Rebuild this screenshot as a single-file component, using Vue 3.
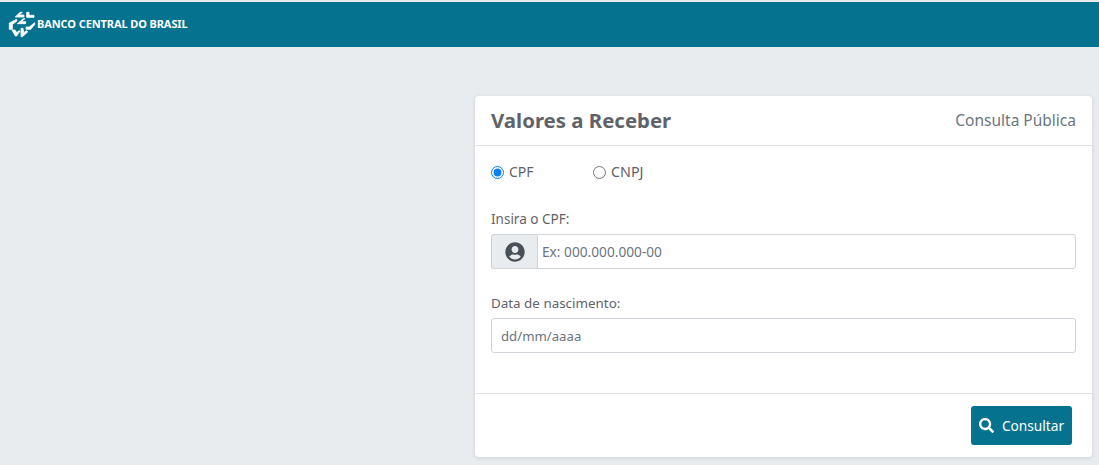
<template>
  <div class="page">
    <header class="topbar">
      <svg class="logo" viewBox="24 30 84 84" width="28" height="28" aria-hidden="true">
        <g fill="#fff" stroke="#fff" stroke-width="2.500" stroke-linejoin="miter">
          <path d="M60 37 L67 37 L57 45 L72 45 L72 51 L46 51 Z" />
          <path d="M80 37 L87 37 L87 46 L102 46 L102 52 L80 52 Z" />
          <path d="M50 58 L50 64 L37 73 L37 88 L28 88 L28 69 Z" />
          <path d="M70 56 L75 56 L63 65 L77 65 L77 71 L52 71 Z" />
          <path d="M104 68 L104 74 L92 88 L78 88 L78 81 L88 81 Z" />
          <path d="M36 90 L45 90 L51 99 L55 93 L60 93 L50 108 L46 108 Z" />
          <path d="M63 85 L69 85 L71 98 L80 92 L83 96 L67 110 L63 110 Z" />
        </g>
      </svg>
      <span class="brand">BANCO CENTRAL DO BRASIL</span>
    </header>
    <main class="content">
      <section class="card">
        <div class="card-head">
          <h1>Valores a Receber</h1>
          <span class="sub">Consulta Pública</span>
        </div>
        <div class="card-body">
          <div class="radios">
            <label class="radio"><input type="radio" name="tipo" checked /><span>CPF</span></label>
            <label class="radio"><input type="radio" name="tipo" /><span>CNPJ</span></label>
          </div>
          <label class="field-label">Insira o CPF:</label>
          <div class="group">
            <span class="addon">
              <svg viewBox="0 0 496 512" width="20" height="20" aria-hidden="true">
                <path fill="#495057" d="M248 8C111 8 0 119 0 256s111 248 248 248 248-111 248-248S385 8 248 8zm0 96c48.600 0 88 39.400 88 88s-39.400 88-88 88-88-39.400-88-88 39.400-88 88-88zm0 344c-58.700 0-111.300-26.600-146.500-68.200 18.800-35.400 55.600-59.800 98.500-59.800 2.400 0 4.800.4 7.100 1.100 13 4.200 26.600 6.900 40.900 6.900 14.300 0 28-2.700 40.900-6.900 2.300-.7 4.700-1.100 7.100-1.100 42.900 0 79.700 24.400 98.500 59.800C359.300 421.400 306.700 448 248 448z"/>
              </svg>
            </span>
            <input class="input joined" type="text" placeholder="Ex: 000.000.000-00" />
          </div>
          <label class="field-label second">Data de nascimento:</label>
          <input class="input date" type="text" placeholder="dd/mm/aaaa" />
        </div>
        <div class="card-foot">
          <button class="btn" type="button">
            <svg viewBox="0 0 512 512" width="15" height="15" aria-hidden="true">
              <path fill="#fff" d="M505 442.700L405.300 343c-4.500-4.500-10.600-7-17-7H372c27.600-35.300 44-79.700 44-128C416 93.100 322.900 0 208 0S0 93.100 0 208s93.100 208 208 208c48.300 0 92.700-16.400 128-44v16.300c0 6.400 2.500 12.500 7 17l99.700 99.700c9.400 9.400 24.600 9.400 33.900 0l28.300-28.300c9.400-9.400 9.400-24.600.1-34zM208 336c-70.700 0-128-57.200-128-128 0-70.700 57.200-128 128-128 70.700 0 128 57.200 128 128 0 70.700-57.200 128-128 128z"/>
            </svg>
            <span>Consultar</span>
          </button>
        </div>
      </section>
    </main>
  </div>
</template>

<script setup>
</script>

<style>
html, body { margin: 0; background: #e9ecef; }
</style>

<style scoped>
.page {
  width: 1099px;
  height: 465px;
  overflow: hidden;
  background: #e9ecef;
  font-family: "Noto Sans", "Open Sans", sans-serif;
  color: #5f6369;
  display: flex;
  flex-direction: column;
}
.topbar {
  margin-top: 2px;
  height: 45px;
  background: #057390;
  display: flex;
  align-items: center;
  padding-left: 8px;
  padding-bottom: 2px;
  box-sizing: border-box;
  gap: 1px;
}
.logo {
  flex: none;
}
.brand {
  color: #fff;
  font-weight: 700;
  font-size: 11px;
  letter-spacing: -0.1px;
  white-space: nowrap;
}
.content {
  display: flex;
  justify-content: flex-end;
  padding: 49px 7px 0 0;
}
.card {
  width: 617px;
  height: 361px;
  background: #fff;
  border-radius: 4px;
  box-shadow: 0 1px 4px rgba(0, 0, 0, 0.12);
  display: flex;
  flex-direction: column;
  box-sizing: border-box;
}
.card-head {
  height: 50px;
  box-sizing: border-box;
  border-bottom: 1px solid #dee2e6;
  padding: 0 16px 2px;
  display: flex;
  align-items: center;
  justify-content: space-between;
}
.card-head h1 {
  margin: 0;
  font-size: 20.400px;
  font-weight: 700;
  color: #5f6369;
}
.sub {
  font-size: 15.500px;
  color: #6c757d;
}
.card-body {
  flex: 1;
  padding: 16px 16px 0;
  display: flex;
  flex-direction: column;
}
.radios {
  display: flex;
  height: 18px;
  align-items: center;
}
.radio {
  display: flex;
  align-items: center;
  width: 102px;
  font-size: 14px;
  gap: 5px;
}
.radio + .radio {
  font-size: 14.300px;
}
.radio input {
  margin: 2px 0 0;
  width: 13px;
  height: 13px;
  accent-color: #0d7ff0;
}
.field-label {
  display: block;
  font-size: 13.500px;
  line-height: 20px;
  margin-top: 29px;
  margin-bottom: 5px;
}
.field-label.second {
  margin-top: 24px;
  font-size: 13.400px;
}
.group {
  display: flex;
  height: 35px;
}
.addon {
  width: 46px;
  box-sizing: border-box;
  background: #e9ecef;
  border: 1px solid #ced4da;
  border-right: 0;
  border-radius: 3px 0 0 3px;
  display: flex;
  align-items: center;
  justify-content: center;
}
.input {
  box-sizing: border-box;
  height: 35px;
  border: 1px solid #ced4da;
  border-radius: 3px;
  background: #fff;
  font-family: inherit;
  font-size: 13.700px;
  color: #495057;
  outline: none;
}
.input::placeholder { color: #6c757d; opacity: 1; }
.input.joined {
  flex: 1;
  min-width: 0;
  border-radius: 0 3px 3px 0;
  padding: 0 4px;
}
.input.date {
  width: 100%;
  padding: 0 9px;
  font-size: 13.200px;
}
.card-foot {
  height: 64px;
  box-sizing: border-box;
  border-top: 1px solid #dee2e6;
  padding: 12px 20px 0 0;
  display: flex;
  justify-content: flex-end;
  align-items: flex-start;
}
.btn {
  height: 39px;
  width: 101px;
  border: 0;
  border-radius: 3px;
  background: #057390;
  color: #fff;
  font-family: inherit;
  font-size: 13.700px;
  display: flex;
  align-items: center;
  justify-content: center;
  gap: 8px;
  padding: 0;
}
</style>
